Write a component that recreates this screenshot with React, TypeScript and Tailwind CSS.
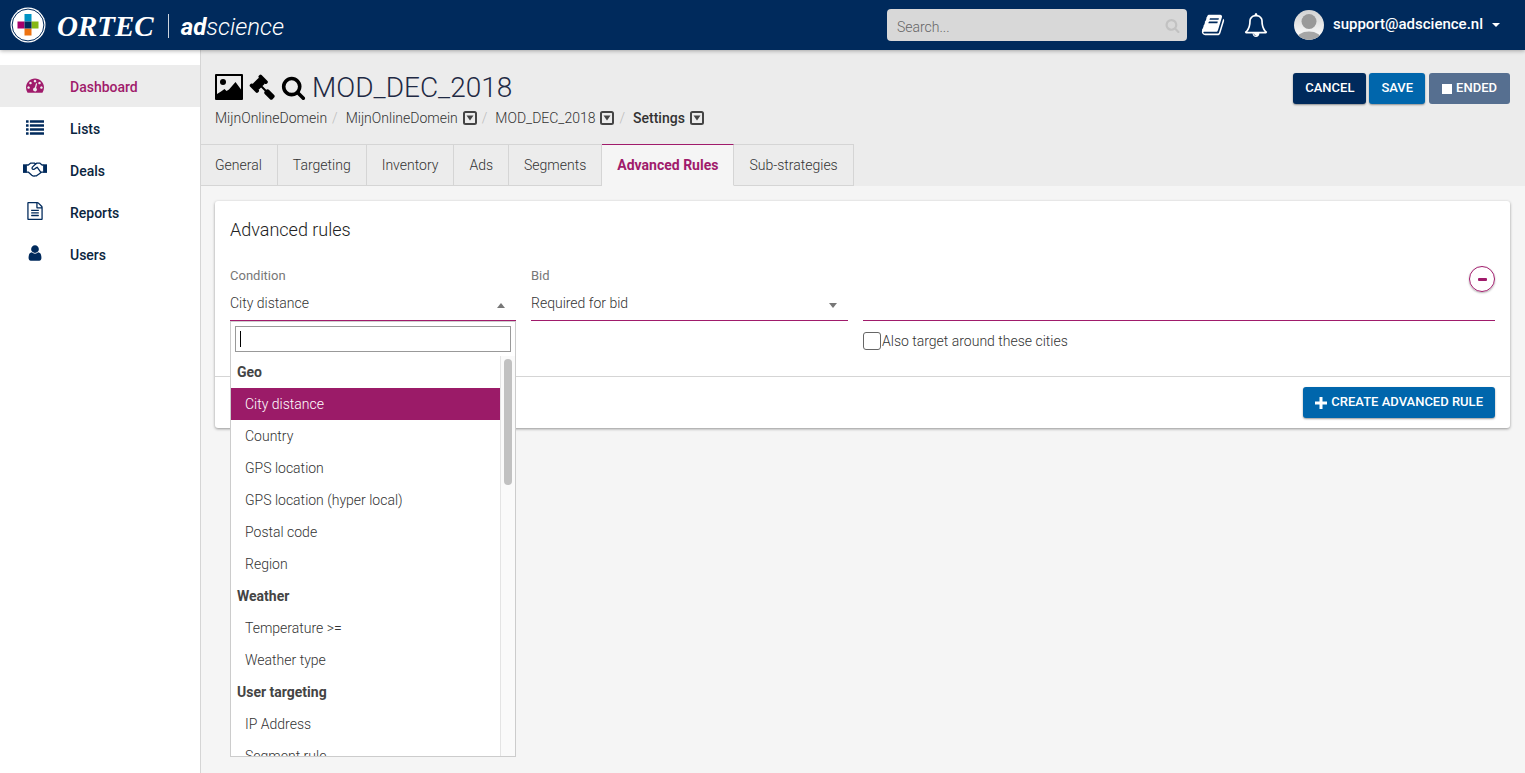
import { useState } from "react";
import type { ReactNode } from "react";

const paths = {
  search:
    "M1216 832q0-185-131.5-316.5t-316.5-131.5-316.5 131.5-131.5 316.5 131.5 316.5 316.5 131.5 316.5-131.5 131.5-316.5zm512 832q0 52-38 90t-90 38q-54 0-90-38l-343-342q-179 124-399 124-143 0-273.5-55.5t-225-150-150-225-55.5-273.5 55.5-273.5 150-225 225-150 273.5-55.5 273.5 55.5 225 150 150 225 55.5 273.5q0 220-124 399l343 343q37 37 37 90z",
  gavel:
    "M1771 1536q0 53-37 90l-107 108q-39 37-91 37-53 0-90-37l-363-364q-38-36-38-90 0-53 43-96l-256-256-126 126q-14 14-34 14t-34-14q2 2 12.5 12t12.5 13 10 11.5 10 13.5 6 13.5 5.5 16.5 1.5 18q0 38-28 68-3 3-16.5 18t-19 20.5-18.5 16.5-22 15.5-22 9-26 4.5q-40 0-68-28l-408-408q-28-28-28-68 0-13 4.5-26t9-22 15.5-22 16.5-18.5 20.5-19 18-16.5q30-28 68-28 10 0 18 1.5t16.5 5.5 13.5 6 13.5 10 11.5 10 13 12.5 12 12.5q-14-14-14-34t14-34l348-348q14-14 34-14t34 14q-2-2-12.5-12t-12.5-13-10-11.5-10-13.5-6-13.5-5.5-16.5-1.5-18q0-38 28-68 3-3 16.5-18t19-20.5 18.5-16.5 22-15.5 22-9 26-4.5q40 0 68 28l408 408q28 28 28 68 0 13-4.5 26t-9 22-15.5 22-16.5 18.5-20.5 19-18 16.5q-30 28-68 28-10 0-18-1.5t-16.5-5.5-13.5-6-13.5-10-11.5-10-13-12.5-12-12.5q14 14 14 34t-14 34l-126 126 256 256q43-43 96-43 52 0 91 37l363 363q37 39 37 91z",
  bell:
    "M912 1696q0-16-16-16-59 0-101.5-42.5t-42.5-101.5q0-16-16-16t-16 16q0 73 51.5 124.5t124.5 51.5q16 0 16-16zm-666-288h1300q-266-300-266-832 0-51-24-105t-69-103-121.5-80.5-169.5-31.5-169.5 31.5-121.5 80.5-69 103-24 105q0 532-266 832zm1482 0q0 52-38 90t-90 38h-448q0 106-75 181t-181 75-181-75-75-181h-448q-52 0-90-38t-38-90q50-42 91-88t85-119.5 74.5-158.5 50-206 19.5-260q0-152 117-282.5t307-158.5q-8-19-8-39 0-40 28-68t68-28 68 28 28 68q0 20-8 39 190 28 307 158.5t117 282.5q0 139 19.5 260t50 206 74.5 158.5 85 119.5 91 88z",
  user:
    "M1536 1399q0 109-62.5 187t-150.5 78h-854q-88 0-150.5-78t-62.5-187q0-85 8.5-160.5t31.5-152 58.5-131 94-89 134.5-34.5q131 128 313 128t313-128q76 0 134.5 34.5t94 89 58.5 131 31.5 152 8.5 160.5zm-256-887q0 159-112.5 271.5t-271.5 112.5-271.5-112.5-112.5-271.5 112.5-271.5 271.5-112.5 271.5 112.5 112.5 271.5z",
  report:
    "M1596 380q28 28 48 76t20 88v1152q0 40-28 68t-68 28h-1344q-40 0-68-28t-28-68v-1600q0-40 28-68t68-28h896q40 0 88 20t76 48zm-444-244v376h376q-10-29-22-41l-313-313q-12-12-41-22zm384 1528v-1024h-416q-40 0-68-28t-28-68v-416h-768v1536h1280zm-1024-864q0-14 9-23t23-9h704q14 0 23 9t9 23v64q0 14-9 23t-23 9h-704q-14 0-23-9t-9-23v-64zm736 224q14 0 23 9t9 23v64q0 14-9 23t-23 9h-704q-14 0-23-9t-9-23v-64q0-14 9-23t23-9h704zm0 256q14 0 23 9t9 23v64q0 14-9 23t-23 9h-704q-14 0-23-9t-9-23v-64q0-14 9-23t23-9h704z",
  dashboard:
    "M384 1152q0-53-37.5-90.5t-90.5-37.5-90.5 37.5-37.5 90.5 37.5 90.5 90.5 37.5 90.5-37.5 37.5-90.5zm192-448q0-53-37.5-90.5t-90.5-37.5-90.5 37.5-37.5 90.5 37.5 90.5 90.5 37.5 90.5-37.5 37.5-90.5zm428 481l101-382q6-26-7.5-48.5t-38.5-29.5-48 6.5-30 39.5l-101 382q-60 5-107 43.5t-63 98.5q-20 77 20 146t117 89 146-20 89-117q16-60-6-117t-72-91zm660-33q0-53-37.5-90.5t-90.5-37.5-90.5 37.5-37.5 90.5 37.5 90.5 90.5 37.5 90.5-37.5 37.5-90.5zm-640-640q0-53-37.5-90.5t-90.5-37.5-90.5 37.5-37.5 90.5 37.5 90.5 90.5 37.5 90.5-37.5 37.5-90.5zm448 192q0-53-37.5-90.5t-90.5-37.5-90.5 37.5-37.5 90.5 37.5 90.5 90.5 37.5 90.5-37.5 37.5-90.5zm320 448q0 261-141 483-19 29-54 29h-1402q-35 0-54-29-141-221-141-483 0-182 71-348t191-286 286-191 348-71 348 71 286 191 191 286 71 348z",
  book:
    "M1703 478q40 57 18 129l-275 906q-19 64-76.5 107.5t-122.5 43.5h-923q-77 0-148.5-53.5t-99.5-131.5q-24-67-2-127 0-4 3-27t4-37q1-8-3-21.5t-3-19.5q2-11 8-21t16.5-23.5 16.5-23.5q23-38 45-91.5t30-91.5q3-10 .5-30t-.5-28q3-11 17-28t17-23q21-36 42-92t25-90q1-9-2.5-32t.5-28q4-13 22-30.5t22-22.5q19-26 42.5-84.5t27.5-96.5q1-8-3-25.5t-2-26.5q2-8 9-18t18-23 17-21q8-12 16.5-30.5t15-35 16-36 19.5-32 26.5-23.5 36-11.5 47.5 5.5l-1 3q38-9 51-9h761q74 0 114 56t18 130l-274 906q-36 119-71.5 153.5t-128.5 34.5h-869q-27 0-38 15-11 16-1 43 24 70 144 70h923q29 0 56-15.5t35-41.5l300-987q7-22 5-57 38 15 59 43zm-1064 2q-4 13 2 22.5t20 9.5h608q13 0 25.5-9.5t16.5-22.5l21-64q4-13-2-22.5t-20-9.5h-608q-13 0-25.5 9.5t-16.5 22.5zm-83 256q-4 13 2 22.5t20 9.5h608q13 0 25.5-9.5t16.5-22.5l21-64q4-13-2-22.5t-20-9.5h-608q-13 0-25.5 9.5t-16.5 22.5z",
};

function Glyph({ name, className }: { name: keyof typeof paths; className: string }) {
  return (
    <svg viewBox="0 0 1792 1792" fill="currentColor" aria-hidden="true" className={`shrink-0 ${className}`}>
      <path d={paths[name]} />
    </svg>
  );
}

function ListGlyph() {
  return (
    <svg viewBox="0 0 18 14.4" fill="currentColor" aria-hidden="true" className="h-[15px] w-[18px]">
      {[0, 4, 8, 12].map((y) => (
        <g key={y}>
          <rect x="0" y={y} width="2.6" height="2.4" rx="0.3" />
          <rect x="3.9" y={y} width="14.1" height="2.4" rx="0.3" />
        </g>
      ))}
    </svg>
  );
}

function HandshakeGlyph() {
  return (
    <svg viewBox="0 0 24 16" fill="none" stroke="currentColor" strokeWidth="1.3" strokeLinejoin="round" strokeLinecap="round" aria-hidden="true" className="h-4 w-6">
      <path d="M0 3.300h3.900v8.600H0z" fill="currentColor" stroke="none" />
      <path d="M20.1 3.300H24v8.600h-3.900z" fill="currentColor" stroke="none" />
      <path d="M3.9 4h1.400L7.800 2.100h3.600l1.200.9 1.300-.9h2.800L19 4h1.100" />
      <path d="M3.900 11.200h1.600l3.300 3q1.700 1.400 3 .7 1.400.3 2.400-.7l2.200-1.500 1.900-1.500h1.800" />
      <path d="M12.600 3 9.400 6.100q-.9 1.500.4 2.200 1.400.5 2.600-.9l1.700-1.200 3.600 5" />
    </svg>
  );
}

function PictureGlyph() {
  return (
    <svg viewBox="0 0 28 26" aria-hidden="true" className="h-[26px] w-7 shrink-0">
      <rect width="28" height="26" rx="1" fill="#000" />
      <path d="M2 2h24v13.500L20.500 8 14 15.500l-2.500 1.500L9.500 15 6 17.500 2 20z" fill="#ececec" />
      <circle cx="8" cy="8" r="3" fill="#000" />
    </svg>
  );
}

function CaretBox() {
  return (
    <button type="button" aria-label="Open menu" className="ml-[5px] flex text-[#444]">
      <svg viewBox="0 0 14 14" aria-hidden="true" className="size-[14px]">
        <rect x="1" y="1" width="12" height="12" rx="1.5" fill="none" stroke="currentColor" strokeWidth="2" />
        <path d="M3.5 4.5h7L7 9.5z" fill="currentColor" />
      </svg>
    </button>
  );
}

function Slash() {
  return <span className="mr-2 ml-[5px] text-[#bbb]">/</span>;
}

function Brand() {
  return (
    <a href="#" className="flex items-center text-white">
      <svg viewBox="0 0 36 36" aria-hidden="true" className="size-9">
        <circle cx="18" cy="18" r="17.5" fill="#fff" />
        <circle cx="18" cy="18" r="15.9" fill="none" stroke="#002a5c" strokeWidth="1" />
        <rect x="14.5" y="7" width="7" height="7.5" fill="#0093c4" />
        <rect x="7.5" y="14.5" width="7" height="7" fill="#a6006b" />
        <rect x="21.5" y="14.5" width="7" height="7" fill="#86b816" />
        <rect x="14.5" y="21.5" width="7" height="7" fill="#ee7412" />
        <rect x="14.5" y="14.5" width="7" height="7" fill="#002a5c" />
      </svg>
      <span className="ml-[11px] pt-0.5 font-['Liberation_Serif',serif] text-[29px] leading-8 font-bold italic">ORTEC</span>
      <span className="mt-0.5 ml-3.5 h-6 w-px bg-white/80" />
      <span className="ml-3 pt-1 text-[24px] leading-8 font-light italic">
        <b className="font-bold">ad</b>science
      </span>
    </a>
  );
}

const nav: { label: string; icon: ReactNode }[] = [
  { label: "Dashboard", icon: <Glyph name="dashboard" className="size-[18px]" /> },
  { label: "Lists", icon: <ListGlyph /> },
  { label: "Deals", icon: <HandshakeGlyph /> },
  { label: "Reports", icon: <Glyph name="report" className="size-[18px]" /> },
  { label: "Users", icon: <Glyph name="user" className="size-[18px]" /> },
];

const tabs = ["General", "Targeting", "Inventory", "Ads", "Segments", "Advanced Rules", "Sub-strategies"];

const groups = [
  { label: "Geo", items: ["City distance", "Country", "GPS location", "GPS location (hyper local)", "Postal code", "Region"] },
  { label: "Weather", items: ["Temperature >=", "Weather type"] },
  { label: "User targeting", items: ["IP Address", "Segment rule"] },
];

const buttonBase = "h-[31px] rounded-[3px] text-[13px] font-medium text-white uppercase";

function ConditionMenu({ value, onPick }: { value: string; onPick: (v: string) => void }) {
  const [filter, setFilter] = useState("");
  return (
    <div className="absolute top-full left-0 z-10 mt-px w-full border border-[#ccc] bg-white">
      <div className="relative p-1">
        <input
          aria-label="Filter conditions"
          value={filter}
          onChange={(e) => setFilter(e.target.value)}
          className="block h-[26px] w-full border border-[#999] px-1 text-sm outline-none"
        />
        {filter === "" && <span className="pointer-events-none absolute top-[9px] left-[9px] h-4 w-px bg-black" />}
      </div>
      <div className="flex h-[400px]">
        <ul role="listbox" aria-label="Conditions" className="min-w-0 flex-1 overflow-hidden">
          {groups.map((g) => (
            <li key={g.label} role="group" aria-label={g.label}>
              <strong className="block px-1.5 text-sm leading-8 font-bold text-[#444]">{g.label}</strong>
              <ul>
                {g.items.map((item) => (
                  <li
                    key={item}
                    role="option"
                    aria-selected={item === value}
                    onClick={() => onPick(item)}
                    className={`cursor-pointer px-3.5 text-sm leading-8 font-light ${item === value ? "bg-[#9b1b68] text-white" : ""}`}
                  >
                    {item}
                  </li>
                ))}
              </ul>
            </li>
          ))}
        </ul>
        <div className="w-[15px] border-l border-[#e4e4e4] bg-[#fafafa] px-[3px] pt-[3px]">
          <div className="h-[126px] w-2 rounded-full bg-[#c1c1c1]" />
        </div>
      </div>
    </div>
  );
}

export default function App() {
  const [condition, setCondition] = useState("City distance");
  const [tab, setTab] = useState("Advanced Rules");

  return (
    <div className="flex min-h-screen flex-col bg-[#f5f5f5] font-['Roboto',sans-serif] text-sm font-light text-[#333]">
      <header className="z-20 flex h-[50px] items-center justify-between bg-[#002a5c] pr-[25px] pl-2.5 shadow-[0_1px_4px_rgba(0,0,0,0.3)]">
        <Brand />
        <div className="flex items-center">
          <label className="flex h-8 w-[300px] items-center rounded-[4px] bg-[#d8d8d8] pr-[7px] pl-2.5">
            <input type="search" aria-label="Search" placeholder="Search..." className="min-w-0 flex-1 bg-transparent pt-1 text-sm font-light outline-none placeholder:text-[#666]" />
            <Glyph name="search" className="size-[15px] text-[#c2c2c2]" />
          </label>
          <button type="button" aria-label="Documentation" className="ml-3.5 text-white">
            <Glyph name="book" className="size-6" />
          </button>
          <button type="button" aria-label="Notifications" className="ml-[19px] text-white">
            <Glyph name="bell" className="size-6" />
          </button>
          <button type="button" className="ml-[26px] flex items-center text-white">
            <svg viewBox="0 0 30 30" aria-hidden="true" className="size-[30px]">
              <defs>
                <linearGradient id="avatar" x2="0" y2="1">
                  <stop stopColor="#d2d2d2" />
                  <stop offset="1" stopColor="#fff" />
                </linearGradient>
                <clipPath id="disc">
                  <circle cx="15" cy="15" r="15" />
                </clipPath>
              </defs>
              <g clipPath="url(#disc)">
                <rect width="30" height="30" fill="url(#avatar)" />
                <circle cx="15" cy="11.5" r="7.5" fill="#999" />
                <ellipse cx="15" cy="30" rx="13" ry="8.5" fill="#a6a6a6" />
              </g>
            </svg>
            <span className="ml-[9px] text-[15px] font-medium">support@adscience.nl</span>
            <svg viewBox="0 0 8 4" aria-hidden="true" className="ml-[9px] h-1 w-2">
              <path d="M0 0h8L4 4z" fill="#fff" />
            </svg>
          </button>
        </div>
      </header>

      <div className="flex flex-1">
        <nav className="w-[201px] shrink-0 border-r border-[#d5d5d5] bg-white pt-[15px]">
          {nav.map((n, i) => (
            <a key={n.label} href="#" className={`flex h-[42px] items-center font-medium ${i === 0 ? "bg-[#ececec] text-[#a01b6b]" : "text-[#002a5c]"}`}>
              <span className="flex w-[70px] justify-center pb-0.5">{n.icon}</span>
              <span className={`pt-0.5 ${i === 0 ? "" : "text-[#0b2540]"}`}>{n.label}</span>
            </a>
          ))}
        </nav>

        <main className="min-w-0 flex-1">
          <div className="bg-[#ececec]">
            <div className="flex items-start justify-between pt-[23px] pr-[15px] pl-3.5">
              <div>
                <div className="flex h-7 items-center text-black">
                  <PictureGlyph />
                  <Glyph name="gavel" className="ml-1.5 size-[26px]" />
                  <Glyph name="search" className="ml-1.5 size-[25px]" />
                  <h1 className="ml-1.5 pt-0.5 text-[28px] leading-7 font-light text-[#1f2a44]">MOD_DEC_2018</h1>
                </div>
                <nav aria-label="Breadcrumb" className="mt-[7px] flex h-5 items-center">
                  <a href="#">MijnOnlineDomein</a>
                  <Slash />
                  <a href="#">MijnOnlineDomein</a>
                  <CaretBox />
                  <Slash />
                  <a href="#">MOD_DEC_2018</a>
                  <CaretBox />
                  <Slash />
                  <a href="#" className="font-medium">Settings</a>
                  <CaretBox />
                </nav>
              </div>
              <div className="flex">
                <button type="button" className={`${buttonBase} bg-[#002a5c] px-3 shadow-[0_1px_2px_rgba(0,0,0,0.4)]`}>Cancel</button>
                <button type="button" className={`${buttonBase} ml-[3px] bg-[#0066ac] px-3 shadow-[0_1px_2px_rgba(0,0,0,0.4)]`}>Save</button>
                <button type="button" disabled className={`${buttonBase} ml-1 flex items-center bg-[#566f90] px-[13px]`}>
                  <span className="mr-1 size-2.5 bg-white" />
                  Ended
                </button>
              </div>
            </div>
            <div role="tablist" className="mt-4 flex">
              {tabs.map((t) => (
                <button
                  key={t}
                  type="button"
                  role="tab"
                  aria-selected={t === tab}
                  onClick={() => setTab(t)}
                  className={`h-[42px] border-t border-r border-b px-[15px] first:pl-3.5 ${
                    t === tab
                      ? "border-t-[#a01b6b] border-r-[#d5d5d5] border-b-[#f5f5f5] bg-[#f5f5f5] font-bold text-[#a01b6b]"
                      : "border-[#d5d5d5]"
                  }`}
                >
                  {t}
                </button>
              ))}
            </div>
          </div>

          <section className="mt-[15px] mr-[15px] ml-3.5 rounded-[3px] bg-white shadow-[0_1px_3px_rgba(0,0,0,0.4)]">
            <div className="px-[15px] pt-4">
              <h2 className="text-lg leading-[26px] font-light text-[#222]">Advanced rules</h2>
              <div className="flex h-[133px] gap-[15px] pt-[23px]">
                <div className="relative h-[55px] w-[286px] border-b border-[#a01b6b]">
                  <div className="text-[13px] leading-5 font-normal text-[#777]">Condition</div>
                  <button type="button" aria-expanded="true" className="flex h-[34px] w-full items-center justify-between pr-[11px]">
                    {condition}
                    <svg viewBox="0 0 8 5" aria-hidden="true" className="mt-1 h-[5px] w-2">
                      <path d="M0 5h8L4 0z" fill="#777" />
                    </svg>
                  </button>
                  <ConditionMenu value={condition} onPick={setCondition} />
                </div>
                <div className="h-[55px] w-[317px] border-b border-[#a01b6b]">
                  <label htmlFor="bid" className="block text-[13px] leading-5 font-normal text-[#777]">Bid</label>
                  <div className="relative flex h-[34px] items-center">
                    <select id="bid" className="h-full w-full appearance-none bg-transparent outline-none">
                      <option>Required for bid</option>
                    </select>
                    <svg viewBox="0 0 8 5" aria-hidden="true" className="pointer-events-none absolute top-[17px] right-[11px] h-[5px] w-2">
                      <path d="M0 0h8L4 5z" fill="#777" />
                    </svg>
                  </div>
                </div>
                <div className="flex-1">
                  <div className="flex h-[55px] items-start border-b border-[#a01b6b]">
                    <input aria-label="Cities" className="h-full min-w-0 flex-1 bg-transparent outline-none" />
                    <button type="button" aria-label="Remove rule" className="flex size-[26px] items-center justify-center rounded-full border border-[#a01b6b] shadow-[0_1px_2px_rgba(0,0,0,0.3)]">
                      <span className="h-[3px] w-[9px] rounded-[1px] bg-[#a01b6b]" />
                    </button>
                  </div>
                  <label className="mt-2.5 flex items-center leading-5">
                    <input type="checkbox" className="mr-px size-[18px] appearance-none rounded-[3px] border border-[#666] bg-white" />
                    Also target around these cities
                  </label>
                </div>
              </div>
            </div>
            <div className="flex h-[52px] items-center justify-end border-t border-[#d5d5d5] px-[15px]">
              <button type="button" className={`${buttonBase} flex items-center bg-[#0066ac] px-3 shadow-[0_1px_2px_rgba(0,0,0,0.4)]`}>
                <svg viewBox="0 0 12 12" aria-hidden="true" className="mr-1 size-3">
                  <path d="M4.5 0h3v4.5H12v3H7.5V12h-3V7.5H0v-3h4.5z" fill="#fff" />
                </svg>
                Create advanced rule
              </button>
            </div>
          </section>
        </main>
      </div>
    </div>
  );
}
